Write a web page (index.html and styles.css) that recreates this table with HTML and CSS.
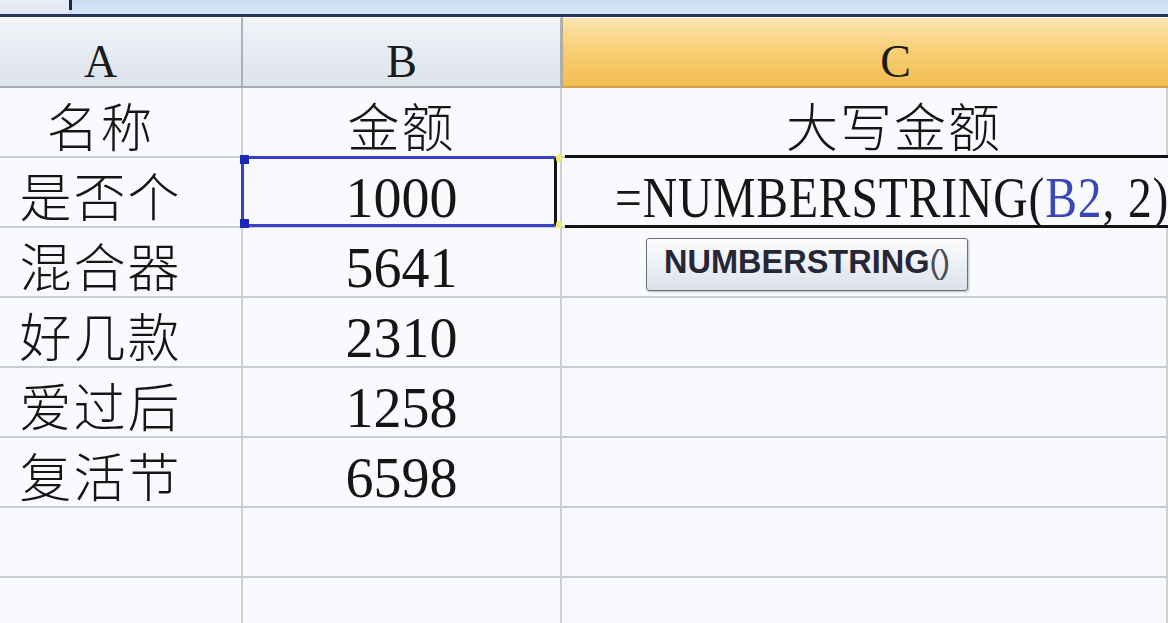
FILE: index.html
```html
<!DOCTYPE html>
<html lang="zh-CN">
<head>
<meta charset="utf-8">
<title>大写金额</title>
<link rel="stylesheet" href="styles.css">
</head>
<body>
<div class="topbar">
  <div class="tb-left"></div>
  <div class="tb-cursor"></div>
  <div class="tb-rest"></div>
</div>
<div class="topline"></div>
<div class="sheet">
  <div class="hd col-a">A</div>
  <div class="hd">B</div>
  <div class="hd hd-active col-c">C</div>

  <div class="cell cjk col-a">名称</div>
  <div class="cell cjk">金额</div>
  <div class="cell cjk col-c">大写金额</div>

  <div class="cell cjk col-a">是否个</div>
  <div class="cell num">1000
    <span class="selbox">
      <span class="hdl hdl-tl"></span>
      <span class="hdl hdl-bl"></span>
      <span class="ylw ylw-t"></span>
      <span class="ylw ylw-b"></span>
    </span>
  </div>
  <div class="cell edit">
    <span class="editbox"></span>
    <span class="formula">=NUMBERSTRING(<span class="ref">B2</span>, 2)</span>
    <div class="tip"><b>NUMBERSTRING</b><span class="paren">()</span></div>
  </div>

  <div class="cell cjk col-a">混合器</div>
  <div class="cell num">5641</div>
  <div class="cell"></div>

  <div class="cell cjk col-a">好几款</div>
  <div class="cell num">2310</div>
  <div class="cell"></div>

  <div class="cell cjk col-a">爱过后</div>
  <div class="cell num">1258</div>
  <div class="cell"></div>

  <div class="cell cjk col-a">复活节</div>
  <div class="cell num">6598</div>
  <div class="cell"></div>

  <div class="cell"></div>
  <div class="cell"></div>
  <div class="cell"></div>

  <div class="cell"></div>
  <div class="cell"></div>
  <div class="cell"></div>
</div>
</body>
</html>
```

FILE: styles.css
```css
* { box-sizing: border-box; }

html, body {
  margin: 0;
  padding: 0;
  width: 1168px;
  height: 623px;
  overflow: hidden;
  background: #f8f9fc;
}

.topbar {
  display: flex;
  align-items: flex-start;
  height: 14px;
  background: #cddff3;
}
.tb-left {
  width: 69px;
  height: 14px;
  background: linear-gradient(#e9eef5, #dde6f0);
}
.tb-cursor {
  width: 3px;
  height: 10px;
  background: #1d2a44;
}
.tb-rest {
  flex: 1;
  height: 14px;
  background: linear-gradient(#c9dcf2, #d6e5f6);
}
.topline {
  height: 3px;
  background: #27375a;
}

.sheet {
  width: 1168px;
  height: 606px;
  overflow: hidden;
  display: grid;
  grid-template-columns: 243px 319px 606px;
  grid-template-rows: 71px repeat(8, 70px);
}

/* column A and C are cut by the window edges: keep text centred on the full column */
.col-a { padding-right: 40px; }
.col-c { padding-left: 60px; }

.hd {
  font-family: "Liberation Serif", serif;
  font-size: 46px;
  line-height: 46px;
  padding-top: 21px;
  text-align: center;
  color: #1c1c1c;
  background: linear-gradient(#f1f4f9, #dde3eb);
  border-right: 2px solid #a9b1bd;
  border-bottom: 2px solid #a3abb7;
  border-top: 1px solid #f7f9fc;
}
.hd-active {
  background: linear-gradient(#fbe4ae 0%, #f8cf78 45%, #f3bd52 100%);
  border-bottom: 2px solid #d9a24a;
  border-left: 1px solid #b7a98c;
  border-right: none;
}

.cell {
  position: relative;
  height: 70px;
  background: #f9fafd;
  border-right: 2px solid #cbd0d8;
  border-bottom: 2px solid #c6cbd4;
  text-align: center;
  color: #151515;
}
.cjk {
  font-family: "Noto Sans CJK SC", sans-serif;
  font-size: 52px;
  font-weight: 300;
  line-height: 52px;
  padding-top: 11px;
  letter-spacing: 2px;
}
.num {
  font-family: "Liberation Serif", serif;
  font-size: 56px;
  line-height: 52px;
  padding-top: 14px;
}

.selbox {
  position: absolute;
  top: -2px;
  left: -2px;
  right: 3px;
  bottom: -1px;
  border: 3px solid #3940c2;
  border-right: 3px solid #141414;
  border-radius: 0 4px 4px 0;
}
.hdl {
  position: absolute;
  left: -4px;
  width: 9px;
  height: 9px;
  background: #1b28b8;
}
.hdl-tl { top: -4px; }
.hdl-bl { bottom: -4px; }
.ylw {
  position: absolute;
  right: -8px;
  width: 6px;
  height: 8px;
  background: #f4ec6a;
  border-radius: 3px;
}
.ylw-t { top: -5px; }
.ylw-b { bottom: -5px; }

.edit {
  text-align: left;
  padding-left: 53px;
  font-family: "Liberation Serif", serif;
  font-size: 56px;
  line-height: 52px;
  padding-top: 14px;
  white-space: nowrap;
  border-right: none;
}
.editbox {
  position: absolute;
  top: -3px;
  left: 3px;
  right: 0;
  bottom: -2px;
  border-top: 3px solid #141414;
  border-bottom: 3px solid #141414;
}
.formula {
  display: inline-block;
  color: #161616;
  letter-spacing: 1px;
  transform: scaleX(0.85);
  transform-origin: left center;
}
.ref { color: #3a47b8; }

.tip {
  position: absolute;
  left: 84px;
  top: 80px;
  width: 322px;
  height: 53px;
  z-index: 2;
  padding-left: 17px;
  border: 1px solid #6c7079;
  border-radius: 3px;
  background: linear-gradient(#fbfcfd, #e9edf3 60%, #dbe1ea);
  box-shadow: 1px 1px 2px rgba(0, 0, 0, 0.25);
  font-family: "Liberation Sans", Arial, sans-serif;
  font-size: 32.5px;
  line-height: 47px;
  color: #262634;
}
.tip b { font-weight: bold; }
.paren {
  font-weight: normal;
  color: #4b4b55;
  letter-spacing: -1px;
}
```
